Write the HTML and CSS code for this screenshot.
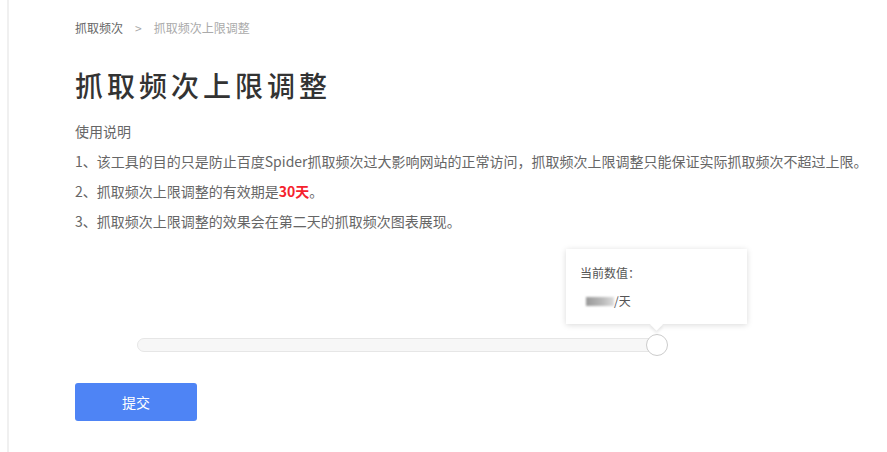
FILE: index.html
```html
<!DOCTYPE html>
<html lang="zh-CN">
<head>
  <meta charset="UTF-8">
  <title>抓取频次上限调整</title>
  <link rel="stylesheet" href="styles.css">
</head>
<body>
  <div class="page">
    <div class="crumbs">
      <span class="crumb-link">抓取频次</span>
      <span class="crumb-sep">&gt;</span>
      <span class="crumb-current">抓取频次上限调整</span>
    </div>
    <h1>抓取频次上限调整</h1>
    <div class="notes">
      <p>使用说明</p>
      <p>1、该工具的目的只是防止百度Spider抓取频次过大影响网站的正常访问，抓取频次上限调整只能保证实际抓取频次不超过上限。</p>
      <p>2、抓取频次上限调整的有效期是<span class="hot">30天</span>。</p>
      <p>3、抓取频次上限调整的效果会在第二天的抓取频次图表展现。</p>
    </div>
    <div class="slider">
      <div class="track">
        <div class="thumb"></div>
      </div>
      <div class="tip">
        <div class="tip-label">当前数值：</div>
        <div class="tip-value"><span class="masked"></span>/天</div>
        <div class="tip-arrow"></div>
      </div>
    </div>
    <button class="submit">提交</button>
  </div>
</body>
</html>
```

FILE: styles.css
```css
body {
  margin: 0;
  background-color: #fff;
  font-family: "Noto Sans CJK SC", "Noto Sans", sans-serif;
  color: #666;
}

.page {
  margin-left: 7px;
  border-left: 2px solid #f0f0f0;
  height: 100vh;
  box-sizing: border-box;
  padding: 18px 0 0 66px;
}

.crumbs {
  font-size: 12px;
  line-height: 20px;
  display: flex;
  gap: 10px;
}

.crumb-link {
  color: #666;
}

.crumb-sep {
  color: #aaa;
  margin: 0 2px;
}

.crumb-current {
  color: #aaa;
}

h1 {
  margin: 27px 0 0;
  font-size: 28px;
  line-height: 40px;
  font-weight: 500;
  color: #333;
  letter-spacing: 4px;
}

.notes {
  margin-top: 11px;
  font-size: 14px;
}

.notes p {
  margin: 0;
  line-height: 30px;
}

.hot {
  color: #f5222d;
  font-weight: bold;
}

.slider {
  position: relative;
  margin: 102px 0 0 62px;
  width: 523px;
}

.track {
  position: relative;
  height: 14px;
  box-sizing: border-box;
  background-color: #f7f7f7;
  border: 1px solid #e6e6e6;
  border-radius: 7px;
}

.thumb {
  position: absolute;
  right: -9px;
  top: -5px;
  width: 22px;
  height: 22px;
  box-sizing: border-box;
  border: 1px solid #ccc;
  border-radius: 50%;
  background-color: #fff;
}

.tip {
  position: absolute;
  left: 429px;
  top: -89px;
  width: 181px;
  height: 75px;
  box-sizing: border-box;
  padding: 14px 0 0 14px;
  background-color: #fff;
  box-shadow: 0 1px 6px rgba(0, 0, 0, 0.15);
  font-size: 12px;
  color: #555;
}

.tip-label {
  line-height: 20px;
}

.tip-value {
  margin-top: 8px;
  line-height: 20px;
  display: flex;
  align-items: center;
}

.masked {
  display: inline-block;
  width: 28px;
  height: 9px;
  margin-left: 6px;
  background: linear-gradient(90deg, #999, #bbb 60%, #ddd);
  filter: blur(1px);
}

.tip-arrow {
  position: absolute;
  left: 86px;
  bottom: -5px;
  width: 9px;
  height: 9px;
  background-color: #fff;
  transform: rotate(45deg);
  box-shadow: 2px 2px 3px rgba(0, 0, 0, 0.08);
}

.submit {
  margin-top: 31px;
  width: 122px;
  height: 38px;
  border: none;
  border-radius: 3px;
  background-color: #4e84f5;
  color: #fff;
  font-family: "Noto Sans CJK SC", sans-serif;
  font-size: 14px;
  cursor: pointer;
}
```
